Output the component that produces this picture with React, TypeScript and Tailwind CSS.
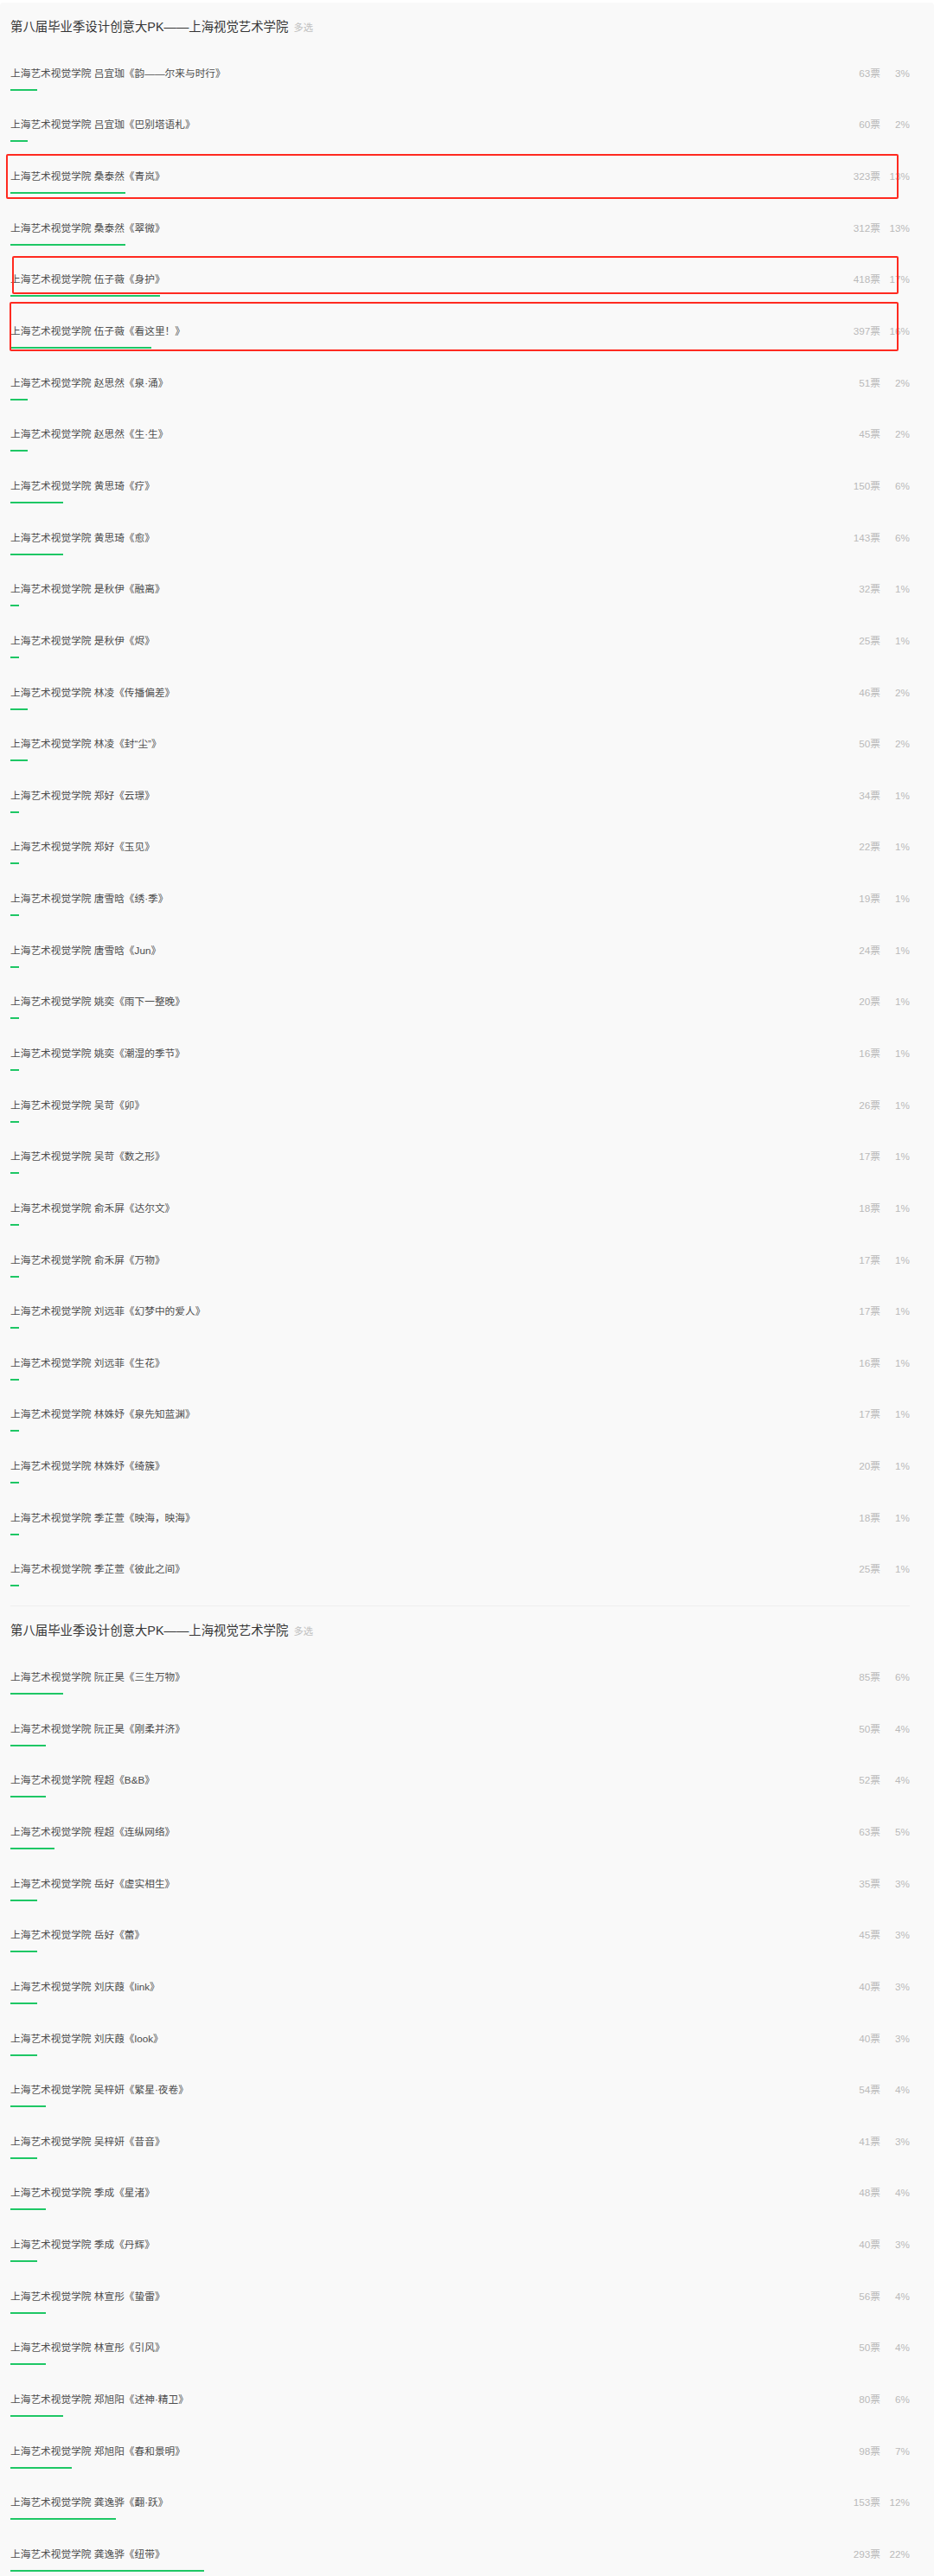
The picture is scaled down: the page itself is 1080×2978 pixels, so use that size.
import React from "react";

type Item = { name: string; title: string; votes: number; pct: number };

const groupA: Item[] = [
  { name: "吕宜珈", title: "韵——尔来与时行", votes: 63, pct: 3 },
  { name: "吕宜珈", title: "巴别塔语札", votes: 60, pct: 2 },
  { name: "桑泰然", title: "青岚", votes: 323, pct: 13 },
  { name: "桑泰然", title: "翠微", votes: 312, pct: 13 },
  { name: "伍子薇", title: "身护", votes: 418, pct: 17 },
  { name: "伍子薇", title: "看这里！", votes: 397, pct: 16 },
  { name: "赵思然", title: "泉·涌", votes: 51, pct: 2 },
  { name: "赵思然", title: "生·生", votes: 45, pct: 2 },
  { name: "黄思琦", title: "疗", votes: 150, pct: 6 },
  { name: "黄思琦", title: "愈", votes: 143, pct: 6 },
  { name: "是秋伊", title: "融离", votes: 32, pct: 1 },
  { name: "是秋伊", title: "烬", votes: 25, pct: 1 },
  { name: "林凌", title: "传播偏差", votes: 46, pct: 2 },
  { name: "林凌", title: "封“尘”", votes: 50, pct: 2 },
  { name: "郑好", title: "云璟", votes: 34, pct: 1 },
  { name: "郑好", title: "玉见", votes: 22, pct: 1 },
  { name: "唐雪晗", title: "绣·季", votes: 19, pct: 1 },
  { name: "唐雪晗", title: "Jun", votes: 24, pct: 1 },
  { name: "姚奕", title: "雨下一整晚", votes: 20, pct: 1 },
  { name: "姚奕", title: "潮湿的季节", votes: 16, pct: 1 },
  { name: "吴苛", title: "卯", votes: 26, pct: 1 },
  { name: "吴苛", title: "数之形", votes: 17, pct: 1 },
  { name: "俞禾屏", title: "达尔文", votes: 18, pct: 1 },
  { name: "俞禾屏", title: "万物", votes: 17, pct: 1 },
  { name: "刘远菲", title: "幻梦中的爱人", votes: 17, pct: 1 },
  { name: "刘远菲", title: "生花", votes: 16, pct: 1 },
  { name: "林姝妤", title: "泉先知蓝渊", votes: 17, pct: 1 },
  { name: "林姝妤", title: "绮簇", votes: 20, pct: 1 },
  { name: "季芷萱", title: "映海，映海", votes: 18, pct: 1 },
  { name: "季芷萱", title: "彼此之间", votes: 25, pct: 1 },
];

const groupB: Item[] = [
  { name: "阮正昊", title: "三生万物", votes: 85, pct: 6 },
  { name: "阮正昊", title: "刚柔并济", votes: 50, pct: 4 },
  { name: "程超", title: "B&B", votes: 52, pct: 4 },
  { name: "程超", title: "连纵网络", votes: 63, pct: 5 },
  { name: "岳好", title: "虚实相生", votes: 35, pct: 3 },
  { name: "岳好", title: "蕾", votes: 45, pct: 3 },
  { name: "刘庆葭", title: "link", votes: 40, pct: 3 },
  { name: "刘庆葭", title: "look", votes: 40, pct: 3 },
  { name: "吴梓妍", title: "繁星·夜卷", votes: 54, pct: 4 },
  { name: "吴梓妍", title: "昔音", votes: 41, pct: 3 },
  { name: "季成", title: "星渚", votes: 48, pct: 4 },
  { name: "季成", title: "丹辉", votes: 40, pct: 3 },
  { name: "林宣彤", title: "蛰雷", votes: 56, pct: 4 },
  { name: "林宣彤", title: "引风", votes: 50, pct: 4 },
  { name: "郑旭阳", title: "述神·精卫", votes: 80, pct: 6 },
  { name: "郑旭阳", title: "春和景明", votes: 98, pct: 7 },
  { name: "龚逸骅", title: "翻·跃", votes: 153, pct: 12 },
  { name: "龚逸骅", title: "纽带", votes: 293, pct: 22 },
];

const OptionRow = ({ item }: { item: Item }) => (
  <div className="h-[59.65px] flex flex-col justify-center">
    <div className="flex items-center h-5 leading-5 text-[11.7px]">
      <span className="flex-1 text-[#4d4d4d] whitespace-nowrap">
        上海艺术视觉学院 {item.name}《{item.title}》
      </span>
      <span className="text-[#b9b9b9]">{item.votes}票</span>
      <span className="w-[34px] text-right text-[#b9b9b9]">{item.pct}%</span>
    </div>
    <div className="mt-2 h-[2px] w-[1020px]">
      <div className="h-full bg-[#1ec765]" style={{ width: `${item.pct}%` }} />
    </div>
  </div>
);

const VoteGroup = ({ items, last }: { items: Item[]; last?: boolean }) => (
  <div className={last ? "pt-[17px]" : "pt-[17px] pb-[7px] border-b border-[#efefef]"}>
    <div className="flex items-baseline h-[22px] leading-[22px] mb-[18px]">
      <span className="text-[14.4px] text-[#353535]">第八届毕业季设计创意大PK——上海视觉艺术学院</span>
      <span className="ml-[6px] text-[11.3px] text-[#c0c0c0]">多选</span>
    </div>
    {items.map((it, i) => (
      <OptionRow key={i} item={it} />
    ))}
  </div>
);

export default function App() {
  return (
    <div
      className="relative w-[1080px] h-[2978px] overflow-hidden bg-white pt-[3px]"
      style={{ fontFamily: '"Liberation Sans", "Noto Sans CJK SC", sans-serif' }}
    >
      <div className="h-full rounded-t-[4px] bg-[#f9f9f9] pl-3 pr-[28px]">
        <VoteGroup items={groupA} />
        <VoteGroup items={groupB} last />
      </div>

      {/* red annotation boxes */}
      <div className="absolute left-[7px] top-[178px] w-[1032px] h-[52px] border-2 border-[#ff2a20] rounded-[2px]" />
      <div className="absolute left-[14px] top-[296px] w-[1025px] h-[44px] border-2 border-[#ff2a20] rounded-[2px]" />
      <div className="absolute left-[11px] top-[349px] w-[1028px] h-[57px] border-2 border-[#ff2a20] rounded-[2px]" />
    </div>
  );
}
